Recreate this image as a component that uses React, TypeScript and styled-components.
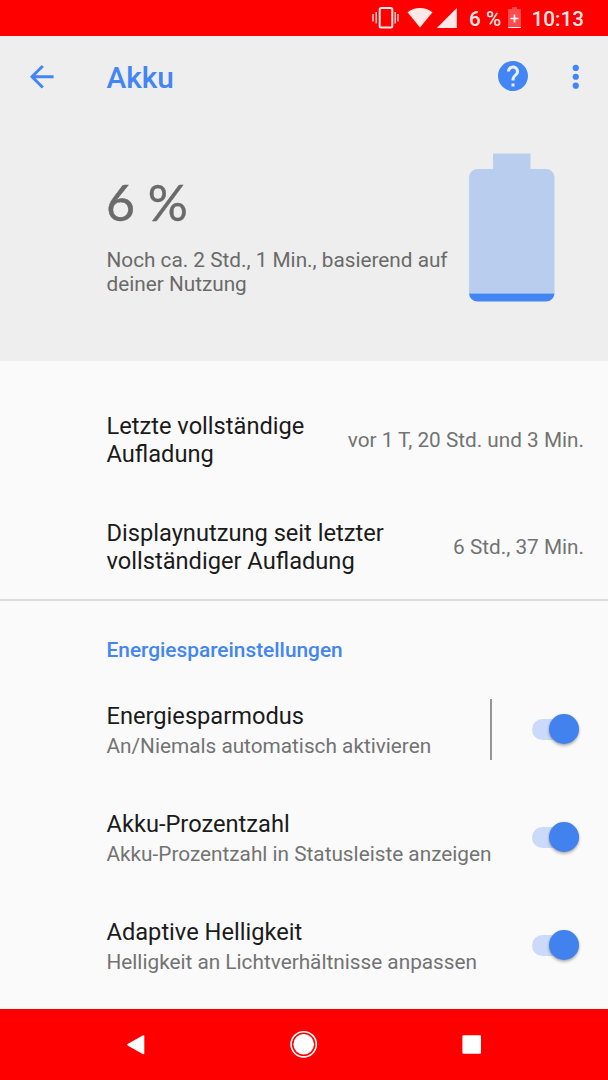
import React from 'react';
import styled, { createGlobalStyle } from 'styled-components';

const blue = '#4285f4';

const GlobalStyle = createGlobalStyle`
  * { box-sizing: border-box; }
  body { margin: 0; background: #fafafa; font-family: Roboto, sans-serif; }
`;

const Screen = styled.div`
  width: 608px;
  height: 1080px;
  overflow: hidden;
  display: flex;
  flex-direction: column;
  background: #fafafa;
`;

const StatusBar = styled.div`
  flex: none;
  height: 35.5px;
  padding: 2px 24px 0 0;
  background: #ff0000;
  color: rgba(255, 255, 255, 0.92);
  display: flex;
  align-items: center;
  justify-content: flex-end;
  font-size: 20.7px;
  font-weight: 500;
  line-height: 24px;
  white-space: nowrap;
  svg { display: block; flex: none; }
`;

const StatusIcons = styled.svg`
  margin: 0 11px 1px 0;
`;

const StatusPercent = styled.span`
  width: 31px;
  margin-right: 8px;
`;

const ChargeIcon = styled.svg`
  margin-bottom: 2px;
`;

const StatusTime = styled.span`
  margin-left: 11px;
  width: 52px;
  display: flex;
  justify-content: flex-end;
`;

const Header = styled.header`
  flex: none;
  height: 325.5px;
  background: #eeeeee;
`;

const AppBar = styled.div`
  height: 82.5px;
  padding: 0 15px 0 23.5px;
  display: flex;
  align-items: center;
  svg { display: block; flex: none; }
`;

const AppTitle = styled.h1`
  margin: 2px 0 0 47.5px;
  flex: 1;
  font-size: 29.8px;
  line-height: 36px;
  font-weight: 500;
  color: ${blue};
`;

const HelpIcon = styled.svg`
  margin: 0 27px 1px 0;
`;

const Summary = styled.div`
  display: flex;
  padding-left: 106.5px;
`;

const SummaryText = styled.div`
  width: 362.5px;
  padding-top: 52px;
  color: #6a6a6a;
`;

const Level = styled.div`
  height: 64px;
  margin-left: -0.5px;
  font-family: Lato, sans-serif;
  font-size: 50px;
  line-height: 64px;
  white-space: pre;
  -webkit-text-stroke: 0.4px #6a6a6a;
`;

const Estimate = styled.p`
  margin: 14px 0 0;
  font-size: 20.75px;
  line-height: 24.4px;
`;

const BatteryPicture = styled.svg`
  display: block;
  margin-top: 35px;
`;

const List = styled.main`
  flex: 1;
  padding-top: 25px;
`;

const UsageRow = styled.div`
  height: 107px;
  padding: 2px 24px 0 106.5px;
  display: flex;
  align-items: center;
  justify-content: space-between;
`;

const Title = styled.div`
  padding-top: 1px;
  font-size: 23.65px;
  line-height: 27.6px;
  color: #1b1b1b;
  white-space: pre-line;
`;

const Value = styled.div`
  padding-bottom: 1px;
  font-size: 20.75px;
  line-height: 24px;
  color: #737373;
  white-space: nowrap;
`;

const Divider = styled.div`
  height: 2px;
  margin-top: -1px;
  background: #dadada;
`;

const Category = styled.h2`
  margin: 0;
  height: 75px;
  padding: 37px 0 0 106.5px;
  font-size: 20.85px;
  line-height: 24px;
  font-weight: 500;
  color: ${blue};
`;

const SettingRow = styled.div`
  height: 108px;
  padding: 0 29px 0 106.5px;
  display: flex;
  align-items: center;
`;

const SettingText = styled.div`
  flex: 1;
`;

const Description = styled.div`
  margin-top: 4px;
  font-size: 20.78px;
  line-height: 24px;
  color: #737373;
  white-space: nowrap;
`;

const Separator = styled.div`
  width: 2px;
  height: 61px;
  margin: 0 40px 2px 0;
  background: #959595;
`;

const Track = styled.button<{ $on: boolean }>`
  width: 47px;
  height: 21px;
  margin-bottom: 2px;
  padding: 0;
  border: 0;
  border-radius: 11px;
  display: flex;
  align-items: center;
  justify-content: ${p => (p.$on ? 'flex-end' : 'flex-start')};
  background: ${p => (p.$on ? '#cadaf8' : '#c4c4c4')};
`;

const Thumb = styled.span`
  flex: none;
  width: 30px;
  height: 30px;
  border-radius: 50%;
  background: #4182ee;
  box-shadow: 0 2px 3px rgba(0, 0, 0, 0.28), 0 0 2px rgba(0, 0, 0, 0.12);
`;

const NavBar = styled.nav`
  flex: none;
  height: 71px;
  background: #ff0000;
  display: flex;
  justify-content: center;
  svg { display: block; }
`;

const usage = [
  { title: 'Letzte vollständige\nAufladung', value: 'vor 1 T, 20 Std. und 3 Min.' },
  { title: 'Displaynutzung seit letzter\nvollständiger Aufladung', value: '6 Std., 37 Min.' },
];

const settings = [
  { title: 'Energiesparmodus', text: 'An/Niemals automatisch aktivieren', split: true },
  { title: 'Akku-Prozentzahl', text: 'Akku-Prozentzahl in Statusleiste anzeigen', split: false },
  { title: 'Adaptive Helligkeit', text: 'Helligkeit an Lichtverhältnisse anpassen', split: false },
];

export default function App() {
  return (
    <Screen>
      <GlobalStyle />
      <StatusBar>
        <StatusIcons width="86" height="24" viewBox="0 0 86 24" fill="none">
          <rect x="7.7" y="2" width="12.6" height="19.4" rx="1.5" stroke="#ffe8e8" strokeWidth="2" />
          <path d="M4.2 6v11.5M1 8v7.5M23.2 6v11.5M26 8v7.5" stroke="#ffe8e8" strokeWidth="1.3" />
          <path d="M35.5 6.3C42.5 .5 53.5 .5 60.5 6.3L48 21.6z" fill="#ffe8e8" />
          <path d="M84.8 2v20H64.8z" fill="#ffe8e8" />
        </StatusIcons>
        <StatusPercent>6 %</StatusPercent>
        <ChargeIcon width="13" height="22" viewBox="0 0 13 22">
          <path d="M4 0h5v2h3q1 0 1 1v17q0 1-1 1H1q-1 0-1-1V3q0-1 1-1h3z" fill="#ff4b4b" />
          <path d="M6.5 7.5v8M2.5 11.5h8" stroke="#fff" strokeWidth="1.7" />
          <path d="M0 20h13q0 1-1 1H1q-1 0-1-1z" fill="#fff" />
        </ChargeIcon>
        <StatusTime>10:13</StatusTime>
      </StatusBar>
      <Header>
        <AppBar>
          <svg width="35.5" height="35.5" viewBox="0 0 24 24" fill={blue}>
            <path d="M20 11H7.83l5.59-5.59L12 4l-8 8 8 8 1.41-1.41L7.83 13H20v-2z" />
          </svg>
          <AppTitle>Akku</AppTitle>
          <HelpIcon width="36" height="36" viewBox="0 0 24 24" fill={blue}>
            <path d="M12 2C6.48 2 2 6.48 2 12s4.48 10 10 10 10-4.48 10-10S17.52 2 12 2zm1 17h-2v-2h2v2zm2.07-7.75l-.9.92C13.45 12.9 13 13.5 13 15h-2v-.5c0-1.1.45-2.1 1.17-2.83l1.24-1.26c.37-.36.59-.86.59-1.41 0-1.1-.9-2-2-2s-2 .9-2 2H8c0-2.21 1.79-4 4-4s4 1.79 4 4c0 .88-.36 1.68-.93 2.25z" />
          </HelpIcon>
          <svg width="35.5" height="35.5" viewBox="0 0 24 24" fill={blue}>
            <circle cx="12" cy="6" r="2.1" />
            <circle cx="12" cy="12" r="2.1" />
            <circle cx="12" cy="18" r="2.1" />
          </svg>
        </AppBar>
        <Summary>
          <SummaryText>
            <Level>6 %</Level>
            <Estimate>Noch ca. 2 Std., 1 Min., basierend auf deiner Nutzung</Estimate>
          </SummaryText>
          <BatteryPicture width="86" height="149" viewBox="0 0 86 149">
            <path d="M24 .5h37.5V16H77a8.5 8.5 0 0 1 8.5 8.5V140.5H0V24.5A8.5 8.5 0 0 1 8.5 16H24z" fill="#b9cdef" />
            <path d="M0 140.5H85.5A8.5 8.5 0 0 1 77 148.5H8.5A8.5 8.5 0 0 1 0 140.5z" fill={blue} />
          </BatteryPicture>
        </Summary>
      </Header>
      <List>
        {usage.map(row => (
          <UsageRow key={row.title}>
            <Title>{row.title}</Title>
            <Value>{row.value}</Value>
          </UsageRow>
        ))}
        <Divider />
        <Category>Energiespareinstellungen</Category>
        {settings.map(row => (
          <SettingRow key={row.title}>
            <SettingText>
              <Title>{row.title}</Title>
              <Description>{row.text}</Description>
            </SettingText>
            {row.split && <Separator />}
            <Track $on role="switch" aria-checked="true" aria-label={row.title}>
              <Thumb />
            </Track>
          </SettingRow>
        ))}
      </List>
      <NavBar>
        <svg width="608" height="71" viewBox="0 0 608 71" fill="#fff">
          <path d="M143.5 27v17.5L128 35.7z" stroke="#fff" strokeWidth="1.6" strokeLinejoin="round" />
          <circle cx="303.7" cy="35.3" r="10.3" />
          <circle cx="303.7" cy="35.3" r="12.6" fill="none" stroke="#fff" strokeWidth="1.6" />
          <rect x="462.4" y="26.2" width="18.6" height="18.6" rx="1" />
        </svg>
      </NavBar>
    </Screen>
  );
}
